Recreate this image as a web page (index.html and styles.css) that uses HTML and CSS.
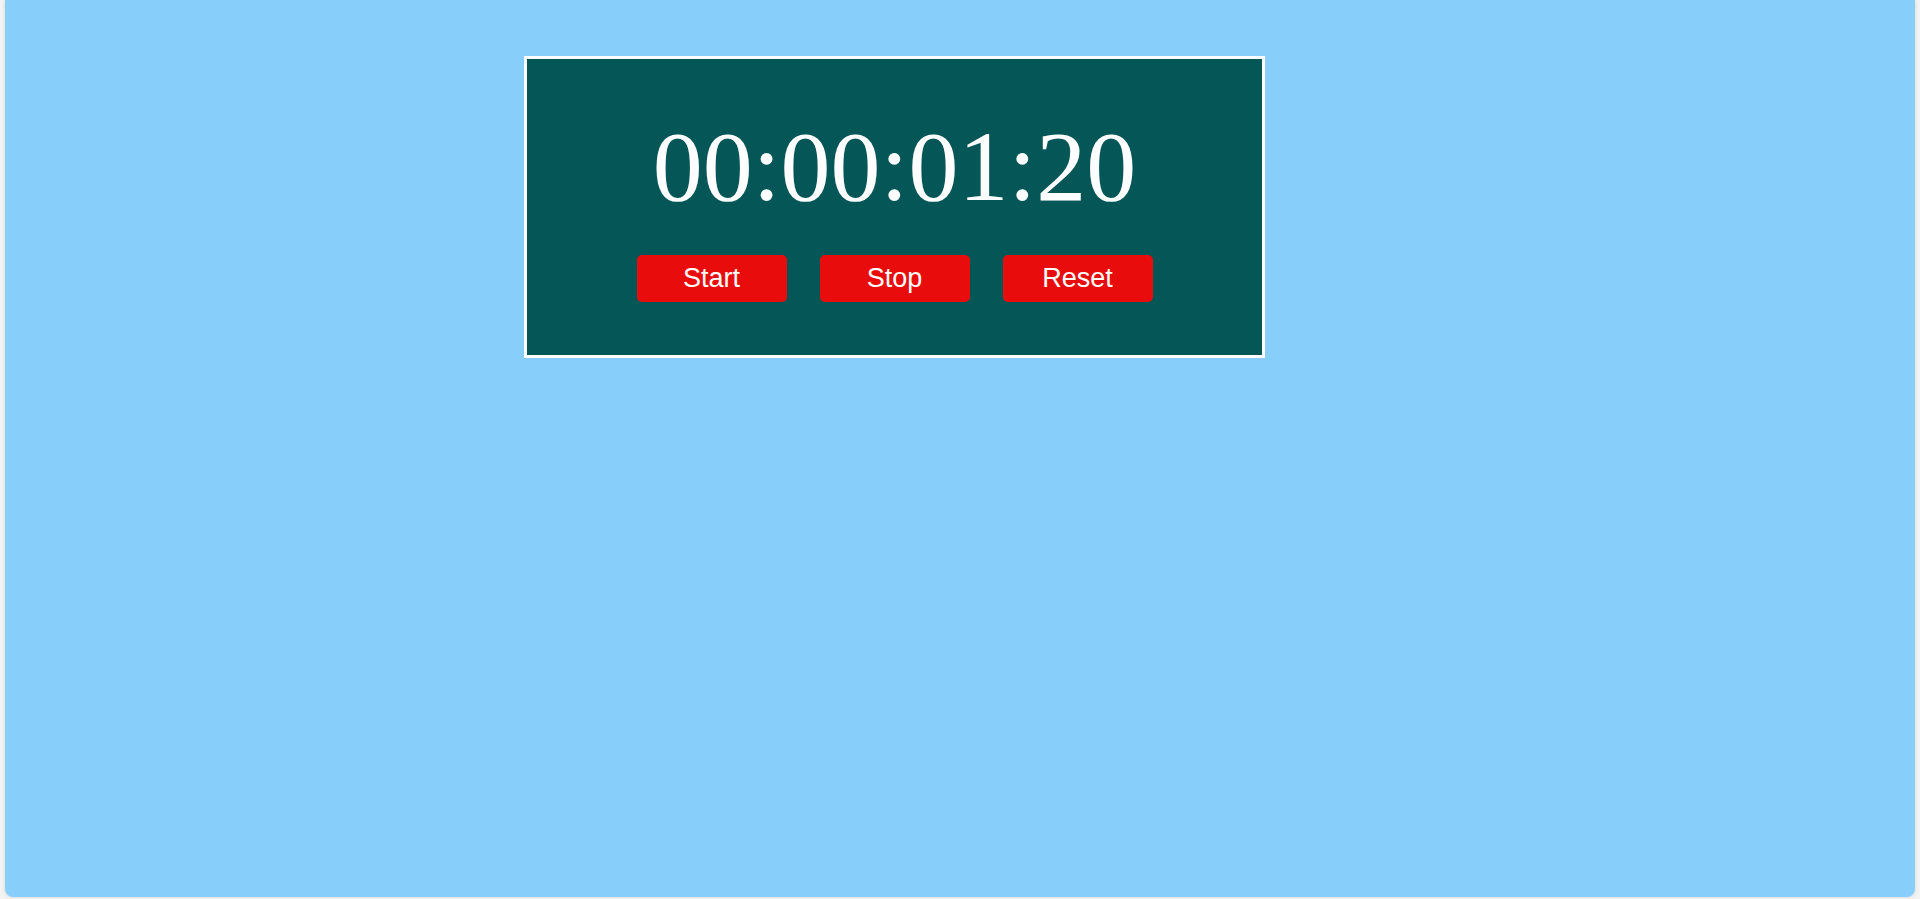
FILE: index.html
```html
<!DOCTYPE html>
<html>
<head>
<meta charset="utf-8">
<title>Stopwatch</title>
<link rel="stylesheet" href="styles.css">
</head>
<body>
<div class="page">
  <div class="watch">
    <div class="time">00:00:01:20</div>
    <div class="controls">
      <button class="btn">Start</button>
      <button class="btn">Stop</button>
      <button class="btn">Reset</button>
    </div>
  </div>
</div>
</body>
</html>
```
FILE: styles.css
```css
html, body {
  margin: 0;
  padding: 0;
}
body {
  background: #f3f3f3;
  height: 899px;
  overflow: hidden;
}
.page {
  margin: 0 5px;
  height: 897px;
  background: #87cefa;
  border-radius: 0 0 8px 8px;
  box-shadow: 0 0 4px rgba(0, 0, 0, 0.12);
  padding-top: 56px;
  box-sizing: border-box;
}
.watch {
  width: 735px;
  margin-left: 519px;
  border: 3px solid #ffffff;
  background: #055757;
  padding: 50px 0 53px;
  box-sizing: content-box;
}
.time {
  font-family: "Liberation Serif", "Times New Roman", serif;
  font-size: 100px;
  line-height: 115px;
  color: #ffffff;
  text-align: center;
}
.controls {
  display: flex;
  justify-content: center;
  gap: 33px;
  margin-top: 31px;
}
.btn {
  width: 150px;
  height: 47px;
  border: none;
  border-radius: 5px;
  background: #e90c0c;
  color: #ffffff;
  font-family: "Liberation Sans", Arial, sans-serif;
  font-size: 27px;
  padding: 0;
  cursor: pointer;
}
```
